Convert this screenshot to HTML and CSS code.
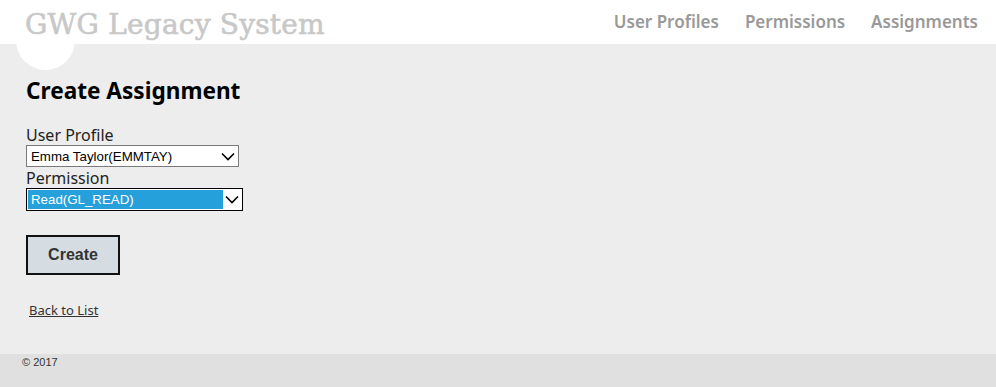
FILE: index.html
```html
<!DOCTYPE html>
<html>
<head>
<meta charset="utf-8">
<link rel="stylesheet" href="styles.css">
</head>
<body>
<header class="topbar">
  <div class="brand">
    <span class="brand-circle"></span>
    <span class="brand-text">GWG Legacy System</span>
  </div>
  <nav class="nav">
    <a href="#">User Profiles</a>
    <a href="#">Permissions</a>
    <a href="#">Assignments</a>
  </nav>
</header>
<main class="content">
  <h2 class="title">Create Assignment</h2>
  <form class="form">
    <label class="label">User Profile</label>
    <div class="select select-profile">
      <span class="select-value">Emma Taylor(EMMTAY)</span>
      <svg class="chev" width="14" height="9" viewBox="0 0 14 9"><path d="M1 1.5 L7 7.5 L13 1.5" fill="none" stroke="#000" stroke-width="1.6"/></svg>
    </div>
    <label class="label">Permission</label>
    <div class="select select-perm">
      <span class="select-value selected">Read(GL_READ)</span>
      <svg class="chev" width="14" height="9" viewBox="0 0 14 9"><path d="M1 1.5 L7 7.5 L13 1.5" fill="none" stroke="#000" stroke-width="1.6"/></svg>
    </div>
    <button type="button" class="btn">Create</button>
  </form>
  <a href="#" class="back">Back to List</a>
</main>
<footer class="footer">© 2017</footer>
</body>
</html>
```
FILE: styles.css
```css
* { box-sizing: border-box; }
html, body { margin: 0; padding: 0; }
body {
  width: 996px;
  height: 387px;
  background: #ededed;
  font-family: "Noto Sans", sans-serif;
  display: flex;
  flex-direction: column;
  overflow: hidden;
}
.topbar {
  height: 44px;
  flex: none;
  background: #fff;
  display: flex;
  justify-content: space-between;
  align-items: flex-start;
  position: relative;
}
.brand { position: relative; padding-left: 25px; }
.brand-circle {
  position: absolute;
  left: 16px;
  top: 11px;
  width: 59px;
  height: 59px;
  border-radius: 50%;
  background: #fff;
}
.brand-text {
  position: relative;
  display: block;
  font-family: "DejaVu Serif", "Liberation Serif", serif;
  font-weight: 400;
  font-size: 28px;
  color: #c8c8c8;
  -webkit-text-stroke: 0.6px #c8c8c8;
  line-height: 1;
  padding-top: 11px;
  letter-spacing: 0.2px;
}
.nav {
  display: flex;
  gap: 26px;
  padding-right: 18px;
  padding-top: 10px;
}
.nav a {
  color: #999;
  text-decoration: none;
  font-size: 17px;
  font-weight: 600;
  font-family: "Noto Sans", sans-serif;
  line-height: 24px;
}
.content {
  flex: 1;
  padding: 0 26px;
  position: relative;
}
.title {
  margin: 32px 0 0 0;
  font-size: 22.6px;
  font-weight: 700;
  line-height: 30px;
  color: #000;
}
.form { display: flex; flex-direction: column; align-items: flex-start; margin-top: 19px; }
.label {
  font-size: 16px;
  line-height: 20px;
  color: #222;
}
.select {
  position: relative;
  height: 22px;
  background: #fff;
  border: 1px solid #7a7a7a;
  font-family: "Liberation Sans", Arial, sans-serif;
  font-size: 13.3px;
  display: flex;
  align-items: center;
}
.select-profile { width: 213px; margin-bottom: 1px; }
.select-perm { width: 217px; height: 23px; border-color: #000; padding: 1px; }
.select-value { padding-left: 4px; flex: 1; height: 100%; display: flex; align-items: center; }
.select-perm .select-value { background: #26a0da; color: #fff; padding-left: 3px; margin-right: 18px; }
.chev { position: absolute; right: 3px; top: 6px; }
.btn {
  margin-top: 24px;
  width: 94px;
  height: 40px;
  background: #d5dde3;
  border: 2px solid #111;
  font-family: "Liberation Sans", Arial, sans-serif;
  font-weight: 700;
  font-size: 16px;
  color: #333;
  padding: 0;
}
.back {
  display: inline-block;
  margin: 26px 0 0 3px;
  font-size: 13px;
  color: #333;
  text-decoration: underline;
  line-height: 18px;
}
.footer {
  height: 33px;
  flex: none;
  background: #e0e0e0;
  font-family: "Liberation Sans", Arial, sans-serif;
  font-size: 11px;
  color: #333;
  padding: 2px 0 0 22px;
}
```
